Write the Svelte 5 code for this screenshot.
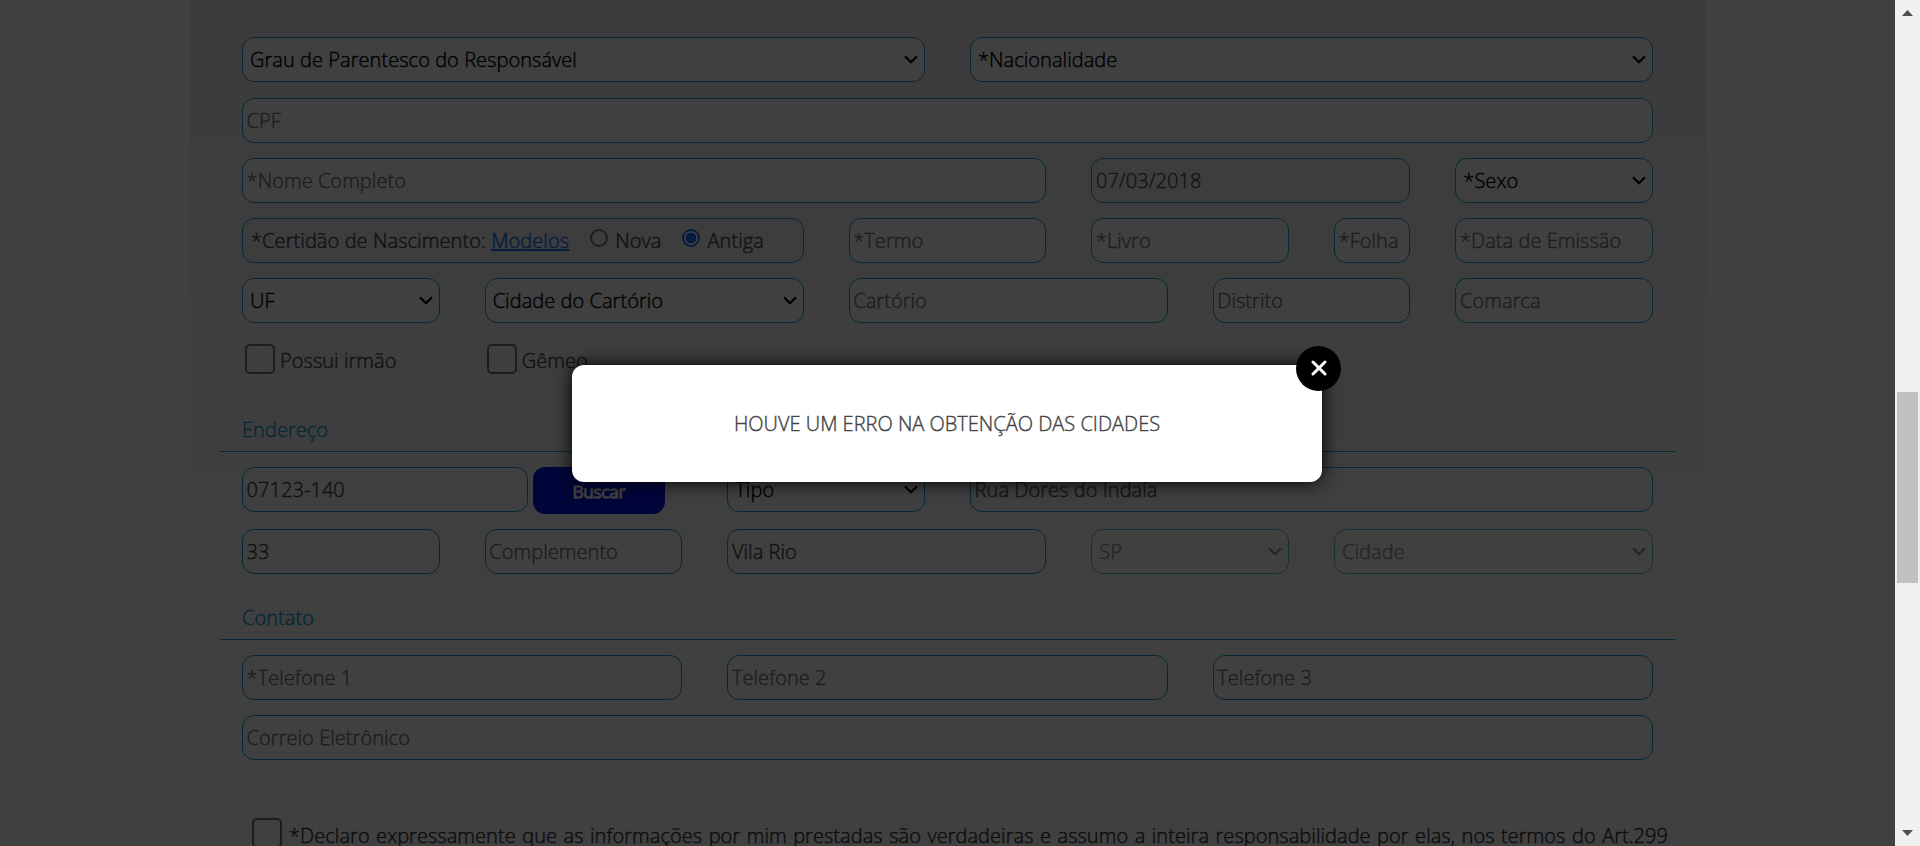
<script>
  const identity = [
    [
      { kind: 'select', text: 'Grau de Parentesco do Responsável', span: 6 },
      { kind: 'select', text: '*Nacionalidade', span: 6 }
    ],
    [{ kind: 'input', text: 'CPF', span: 12 }],
    [
      { kind: 'input', text: '*Nome Completo', span: 7 },
      { kind: 'input', text: '07/03/2018', span: 3, tone: 'locked value' },
      { kind: 'select', text: '*Sexo', span: 2 }
    ],
    [
      { kind: 'certificate', span: 5 },
      { kind: 'input', text: '*Termo', span: 2 },
      { kind: 'input', text: '*Livro', span: 2 },
      { kind: 'input', text: '*Folha', span: 1 },
      { kind: 'input', text: '*Data de Emissão', span: 2 }
    ],
    [
      { kind: 'select', text: 'UF', span: 2 },
      { kind: 'select', text: 'Cidade do Cartório', span: 3 },
      { kind: 'input', text: 'Cartório', span: 3 },
      { kind: 'input', text: 'Distrito', span: 2 },
      { kind: 'input', text: 'Comarca', span: 2 }
    ]
  ];
  const address = [
    [
      { kind: 'cep', text: '07123-140', span: 4 },
      { kind: 'select', text: 'Tipo', span: 2 },
      { kind: 'input', text: 'Rua Dores do Indaia', span: 6, tone: 'locked value' }
    ],
    [
      { kind: 'input', text: '33', span: 2, tone: 'value' },
      { kind: 'input', text: 'Complemento', span: 2 },
      { kind: 'input', text: 'Vila Rio', span: 3, tone: 'value' },
      { kind: 'select', text: 'SP', span: 2, tone: 'disabled' },
      { kind: 'select', text: 'Cidade', span: 3, tone: 'disabled' }
    ]
  ];
  const contact = [
    [
      { kind: 'input', text: '*Telefone 1', span: 4 },
      { kind: 'input', text: 'Telefone 2', span: 4 },
      { kind: 'input', text: 'Telefone 3', span: 4 }
    ],
    [{ kind: 'input', text: 'Correio Eletrônico', span: 12 }]
  ];
</script>

{#snippet rows(list)}
  {#each list as row}
    <div class="row">
      {#each row as f}
        <div class="cell" style="grid-column: span {f.span}">
          {#if f.kind === 'select'}
            <div class="field select {f.tone ?? ''}">
              <span>{f.text}</span>
              <svg width="14" height="9" viewBox="0 0 14 9"><path d="M1 1.2 7 7.2 13 1.2" /></svg>
            </div>
          {:else if f.kind === 'certificate'}
            <div class="field certificate">
              <span>*Certidão de Nascimento: <span class="link">Modelos</span></span>
              <i class="radio"></i><span>Nova</span>
              <i class="radio on"></i><span>Antiga</span>
            </div>
          {:else if f.kind === 'cep'}
            <div class="field cep value">{f.text}</div>
            <div class="search">Buscar</div>
          {:else}
            <div class="field {f.tone ?? ''}">{f.text}</div>
          {/if}
        </div>
      {/each}
    </div>
  {/each}
{/snippet}

<div class="window">
  <div class="page">
    <div class="panel">
      <div class="group identity">{@render rows(identity)}</div>
      <div class="row checks">
        <div class="check" style="grid-column: span 2"><i class="box"></i>Possui irmão</div>
        <div class="check" style="grid-column: span 3"><i class="box"></i>Gêmeo</div>
      </div>
      <div class="title">Endereço</div>
      <div class="group address">{@render rows(address)}</div>
      <div class="title contact-title">Contato</div>
      <div class="group">{@render rows(contact)}</div>
      <div class="declare">
        <i class="box"></i>
        <p>*Declaro expressamente que as informações por mim prestadas são verdadeiras e assumo a inteira responsabilidade por elas, nos termos do Art.299</p>
      </div>
    </div>
    <div class="overlay">
      <div class="modal">
        HOUVE UM ERRO NA OBTENÇÃO DAS CIDADES
        <div class="close">
          <svg width="16" height="16" viewBox="0 0 16 16"><path d="M2 2 14 14M14 2 2 14" /></svg>
        </div>
      </div>
    </div>
  </div>
  <div class="scrollbar">
    <svg width="11" height="6" viewBox="0 0 11 6"><path d="M0 6 5.5 0 11 6Z" /></svg>
    <div class="thumb"></div>
    <svg width="11" height="6" viewBox="0 0 11 6"><path d="M0 0H11L5.500 6Z" /></svg>
  </div>
</div>

<style>
  :global(body) {
    margin: 0;
    overflow: hidden;
  }
  .window {
    display: flex;
    width: 1920px;
    height: 846px;
    overflow: hidden;
    font: 300 20px/27px 'Open Sans', sans-serif;
    letter-spacing: 0.05px;
    -webkit-text-stroke: 0.4px currentColor;
    color: #444;
  }
  .window * {
    box-sizing: border-box;
  }
  .page {
    position: relative;
    width: 1895px;
    height: 846px;
    overflow: hidden;
    background: #fff;
  }
  .panel {
    width: 1516px;
    height: 846px;
    margin-left: 190px;
    padding: 37px 31px 0 30px;
    background: linear-gradient(#ededed, #fefefe 680px);
  }
  .group {
    display: flex;
    flex-direction: column;
    gap: 15px;
  }
  .row {
    display: grid;
    grid-template-columns: repeat(12, minmax(0, 1fr));
    column-gap: 45px;
    padding: 0 22px;
  }
  .identity .row:first-child {
    margin-bottom: 1px;
  }
  .cell {
    display: flex;
    min-width: 0;
  }
  .field {
    display: flex;
    align-items: center;
    flex: 1;
    min-width: 0;
    height: 45px;
    padding: 0 3.6px;
    border: 1px solid #10a0d8;
    border-radius: 12px;
    background: #fff;
    color: #757575;
    white-space: nowrap;
  }
  .value {
    color: #444;
  }
  .locked {
    background: transparent;
    color: #555;
  }
  .select {
    justify-content: space-between;
    padding: 0 6px 0 7px;
    color: #000;
  }
  .disabled {
    opacity: 0.7;
    color: #6a6a6a;
  }
  svg path {
    fill: none;
    stroke: currentColor;
    stroke-width: 2.2;
  }
  .certificate {
    padding-left: 8px;
    background: transparent;
    color: #444;
    letter-spacing: 0.08px;
  }
  .link {
    color: #0d6efd;
    text-decoration: underline;
  }
  .radio {
    width: 18px;
    height: 18px;
    margin: -5px 7px 0 21px;
    border: 2px solid #757575;
    border-radius: 50%;
  }
  .on {
    border: 2px solid #0d6efd;
    background: radial-gradient(circle, #0d6efd 5px, #fff 5.8px);
  }
  .cep {
    flex: 0 0 286px;
  }
  .search {
    display: flex;
    align-items: center;
    justify-content: center;
    width: 132px;
    height: 47px;
    margin-left: 5px;
    padding-top: 1px;
    border-radius: 12px;
    background: #0014e6;
    color: #fff;
    font-size: 17px;
    -webkit-text-stroke: 1.5px #fff;
  }
  .checks {
    height: 51px;
    padding-top: 21px;
  }
  .check {
    display: flex;
    padding-left: 3px;
  }
  .check + .check {
    padding-left: 2px;
  }
  .box {
    flex: none;
    width: 30px;
    height: 30px;
    margin-right: 5px;
    border: 2px solid #757575;
    border-radius: 5px;
  }
  .check,
  .declare {
    line-height: 33px;
  }
  .title {
    height: 78px;
    padding: 42px 0 0 22px;
    border-bottom: 1px solid #10a0d8;
    color: #10a0d8;
    margin-bottom: 15px;
  }
  .address .row {
    height: 45px;
  }
  .address {
    gap: 17px;
  }
  .contact-title {
    height: 66px;
    padding-top: 30px;
  }
  .declare {
    display: flex;
    margin-top: 58px;
    padding: 0 7px 0 32px;
    color: #333;
  }
  .declare .box {
    margin-right: 7px;
  }
  .declare p {
    flex: 1;
    margin: 0;
    padding-top: 1px;
    text-align: justify;
    text-align-last: justify;
  }
  .overlay {
    position: absolute;
    inset: 0;
    display: flex;
    align-items: center;
    justify-content: center;
    padding-right: 1px;
    background: rgba(0, 0, 0, 0.75);
  }
  .modal {
    position: relative;
    display: flex;
    align-items: center;
    justify-content: center;
    width: 750px;
    height: 117px;
    border-radius: 12px;
    background: #fff;
    box-shadow: 0 0 18px #000;
    letter-spacing: 0;
  }
  .close {
    position: absolute;
    top: -19px;
    right: -19px;
    display: flex;
    align-items: center;
    justify-content: center;
    width: 45px;
    height: 45px;
    border-radius: 50%;
    background: #000;
    color: #fff;
  }
  .close path {
    stroke-width: 3;
    stroke-linecap: round;
  }
  .scrollbar {
    display: flex;
    flex-direction: column;
    align-items: center;
    width: 25px;
    height: 846px;
    padding: 10px 0;
    background: #f0f0f0;
  }
  .scrollbar path {
    fill: #505050;
    stroke: none;
  }
  .thumb {
    width: 21px;
    height: 191px;
    margin: 376px 0 auto;
    background: #c1c1c1;
  }
</style>
